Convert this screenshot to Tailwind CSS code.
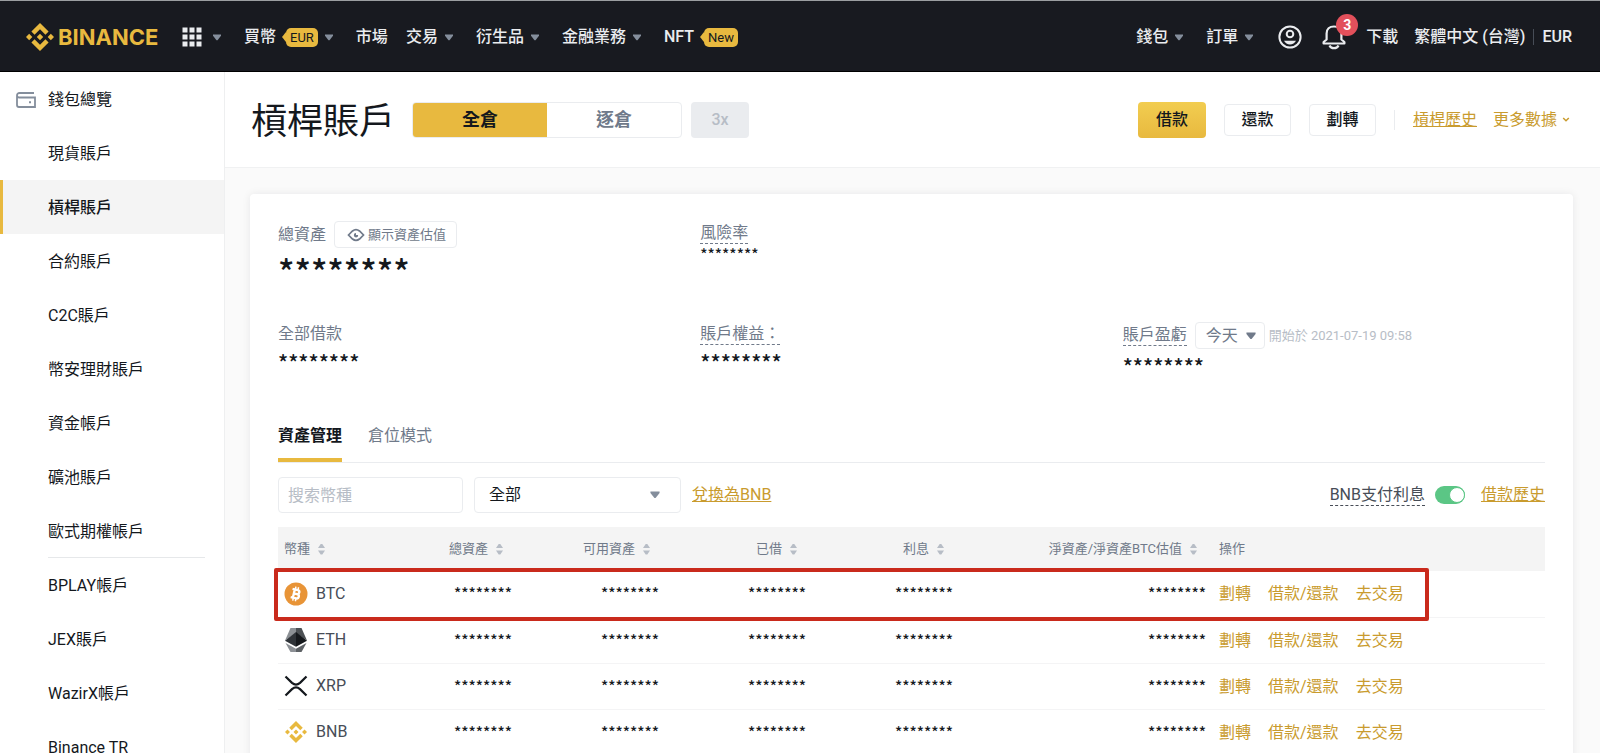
<!DOCTYPE html>
<html lang="zh-Hant">
<head>
<meta charset="utf-8">
<title>槓桿賬戶</title>
<script src="https://cdn.jsdelivr.net/npm/@tailwindcss/browser@4"></script>
</head>
<body class="h-screen flex flex-col overflow-hidden bg-[#fafafa] font-[Roboto,'Noto_Sans_CJK_TC',sans-serif] text-base leading-6 text-[#14181d]">
<svg class="hidden" aria-hidden="true">
  <symbol id="caret" viewBox="0 0 10 7"><path d="M1 .5h8v1.2L5.500 6.200h-1L1 1.700z" fill="currentColor"/></symbol>
  <symbol id="sort" viewBox="0 0 7 12"><path d="M0 5h7L4.300 1H2.700zM0 7.500h7L4.300 11.500H2.700z" fill="currentColor"/></symbol>
  <symbol id="diamond" viewBox="0 0 126.600 126.600"><path fill="currentColor" d="M38.700 53.200 63.300 28.600 87.900 53.200 102.200 38.900 63.300 0 24.400 38.900zM0 63.300 14.300 49 28.600 63.300 14.300 77.600zM38.700 73.400 63.300 98 87.900 73.400 102.200 87.700 63.300 126.600 24.400 87.700zM98 63.300 112.300 49 126.600 63.300 112.300 77.600zM77.800 63.300 63.300 48.800 48.800 63.300 63.300 77.800z"/></symbol>
</svg>

<header class="h-[72px] shrink-0 flex items-center justify-between pt-0.5 pl-[26px] pr-7 bg-[#181a20] border-t border-t-[#9b9ea1] border-b border-b-black text-[#eaecef] font-medium whitespace-nowrap">
  <nav class="flex items-center">
    <a href="#" class="flex items-center gap-1 text-[#e8b93f]">
      <svg class="size-7"><use href="#diamond"/></svg>
      <span class="w-[104px] font-[Inter] font-bold text-[22px]">BINANCE</span>
    </a>
    <button aria-label="產品" class="ml-5 flex items-center gap-2.5">
      <svg class="size-5" viewBox="0 0 20 20" fill="#eaecef"><path d="M.5.5h5v5h-5zM7.500.5h5v5h-5zM14.500.5h5v5h-5zM.5 7.500h5v5h-5zM7.500 7.500h5v5h-5zM14.500 7.500h5v5h-5zM.5 14.500h5v5h-5zM7.500 14.500h5v5h-5zM14.500 14.500h5v5h-5z"/></svg>
      <svg class="w-2.5 h-[7px] text-[#848e9c]"><use href="#caret"/></svg>
    </button>
    <a href="#" class="ml-[22px] flex items-center">買幣
      <span class="ml-1.5 flex items-center"><svg class="w-1 h-2.5" viewBox="0 0 4 10"><path d="M4 0v10L0 5z" fill="#e8b93f"/></svg><span class="rounded-[5px] bg-[#e8b93f] px-1 text-[13px] leading-[19px] font-normal text-[#14181d]">EUR</span></span>
      <svg class="ml-1.5 w-2.5 h-[7px] text-[#848e9c]"><use href="#caret"/></svg>
    </a>
    <a href="#" class="ml-[22px]">市場</a>
    <a href="#" class="ml-[18px] flex items-center gap-1.5">交易 <svg class="w-2.5 h-[7px] text-[#848e9c]"><use href="#caret"/></svg></a>
    <a href="#" class="ml-[22px] flex items-center gap-1.5">衍生品 <svg class="w-2.5 h-[7px] text-[#848e9c]"><use href="#caret"/></svg></a>
    <a href="#" class="ml-[22px] flex items-center gap-1.5">金融業務 <svg class="w-2.5 h-[7px] text-[#848e9c]"><use href="#caret"/></svg></a>
    <a href="#" class="ml-[22px] flex items-center">NFT
      <span class="ml-1.5 flex items-center"><svg class="w-1 h-2.5" viewBox="0 0 4 10"><path d="M4 0v10L0 5z" fill="#e8b93f"/></svg><span class="rounded-[5px] bg-[#e8b93f] px-1 text-[13px] leading-[19px] font-normal text-[#14181d]">New</span></span>
    </a>
  </nav>
  <div class="flex items-center">
    <a href="#" class="flex items-center gap-1.5">錢包 <svg class="w-2.5 h-[7px] text-[#848e9c]"><use href="#caret"/></svg></a>
    <a href="#" class="ml-[22px] flex items-center gap-1.5">訂單 <svg class="w-2.5 h-[7px] text-[#848e9c]"><use href="#caret"/></svg></a>
    <button aria-label="個人中心" class="ml-6"><svg class="size-6" viewBox="0 0 24 24" fill="none" stroke="#eaecef" stroke-width="2"><circle cx="12" cy="12" r="10.600"/><circle cx="12" cy="9" r="3.300"/><path d="M6 15.800h12c-1.200 2.500-3.500 3.600-6 3.600s-4.800-1.100-6-3.600z" fill="#eaecef" stroke="none"/></svg></button>
    <button aria-label="通知" class="relative ml-5"><svg class="w-6 h-[26px]" viewBox="0 0 24 26" fill="none" stroke="#eaecef" stroke-width="2.200"><path d="M4.600 15.500V9.500C4.600 5 7.500 2.500 12 2.500s7.400 2.500 7.400 7v6l3 2.500v1.500H1.600V18z" stroke-linejoin="round"/><path d="M7.500 21.500c1 2.200 2.500 2.700 4.500 2.700s3.500-.5 4.500-2.700"/></svg><span class="absolute -top-2.5 left-3.5 size-[22px] rounded-full bg-[#e2505b] text-sm leading-[22px] font-bold text-white">3</span></button>
    <a href="#" class="ml-5">下載</a>
    <a href="#" class="ml-4">繁體中文 (台灣)</a>
    <span class="mx-2 h-4 w-px bg-[#474d57]"></span>
    <a href="#">EUR</a>
  </div>
</header>

<div class="flex-1 min-h-0 flex">
  <aside class="w-[225px] shrink-0 overflow-hidden bg-white border-r border-[#eeeff0]">
    <nav class="flex flex-col">
      <a href="#" class="h-[54px] shrink-0 flex items-center gap-3 pt-px pl-4"><svg class="w-5 h-4" viewBox="0 0 20 16" fill="none" stroke="#848e9c" stroke-width="1.800"><path d="M18 1H3.500a2.500 2.500 0 0 0-2.500 2.500V13a2 2 0 0 0 2 2h16V5.500H3.500A2.200 2.200 0 0 1 1 3.300"/><path d="M13 10.300h2" stroke-width="2"/></svg>錢包總覽</a>
      <a href="#" class="h-[54px] shrink-0 flex items-center pt-px pl-12">現貨賬戶</a>
      <a href="#" aria-current="page" class="h-[54px] shrink-0 flex items-center border-l-[3px] border-[#e8b93f] bg-[#f4f4f4] pt-px pl-[45px] font-medium">槓桿賬戶</a>
      <a href="#" class="h-[54px] shrink-0 flex items-center pt-px pl-12">合約賬戶</a>
      <a href="#" class="h-[54px] shrink-0 flex items-center pt-px pl-12">C2C賬戶</a>
      <a href="#" class="h-[54px] shrink-0 flex items-center pt-px pl-12">幣安理財賬戶</a>
      <a href="#" class="h-[54px] shrink-0 flex items-center pt-px pl-12">資金帳戶</a>
      <a href="#" class="h-[54px] shrink-0 flex items-center pt-px pl-12">礦池賬戶</a>
      <a href="#" class="h-[54px] shrink-0 flex items-center pt-px pl-12">歐式期權帳戶</a>
      <hr class="-mt-px ml-12 mr-[19px] border-[#e6e8ea]">
      <a href="#" class="h-[54px] shrink-0 flex items-center pt-px pl-12">BPLAY帳戶</a>
      <a href="#" class="h-[54px] shrink-0 flex items-center pt-px pl-12">JEX賬戶</a>
      <a href="#" class="h-[54px] shrink-0 flex items-center pt-px pl-12">WazirX帳戶</a>
      <a href="#" class="h-[54px] shrink-0 flex items-center pt-px pl-12">Binance TR</a>
    </nav>
  </aside>

  <main class="flex-1 min-w-0 overflow-hidden whitespace-nowrap">
    <div class="h-24 flex items-center justify-between bg-white border-b border-[#f0f1f2] pl-[26px] pr-[30px]">
      <div class="flex items-center">
        <h1 class="pt-1 text-4xl">槓桿賬戶</h1>
        <div class="ml-[17px] flex h-9 w-[270px] overflow-hidden rounded border border-[#eaecef] text-lg font-bold">
          <button class="flex-1 bg-[#e8b93f]">全倉</button>
          <button class="flex-1 text-[#707a8a]">逐倉</button>
        </div>
        <button class="ml-[9px] h-9 w-[58px] rounded bg-[#eaecef] font-medium text-[#b7bdc6]">3x</button>
      </div>
      <div class="flex items-center">
        <button class="h-9 w-[68px] rounded bg-linear-to-b from-[#f2cd50] to-[#e8b93f] font-medium">借款</button>
        <button class="ml-[18px] h-8 w-[67px] rounded border border-[#eaecef] font-medium">還款</button>
        <button class="ml-[18px] h-8 w-[67px] rounded border border-[#eaecef] font-medium">劃轉</button>
        <span class="mx-[18px] h-5 w-px bg-[#eaecef]"></span>
        <a href="#" class="underline text-[#c99b2e]">槓桿歷史</a>
        <button class="ml-4 flex items-center gap-[5px] text-[#c99b2e]">更多數據 <svg class="w-2 h-1.5" viewBox="0 0 8 6" fill="none" stroke="currentColor" stroke-width="1.500"><path d="M1.200 1 4 3.800 6.800 1"/></svg></button>
      </div>
    </div>

    <section class="mt-[26px] ml-[25px] mr-[27px] min-h-full rounded bg-white px-7 pt-6 shadow-[0_0_8px_rgba(24,26,32,0.08)]">
      <div class="grid grid-cols-3 gap-y-[34px]">
        <div>
          <div class="flex items-center gap-2 pt-[3px] text-[#707a8a]">總資產
            <button class="h-[27px] flex items-center gap-[3px] rounded border border-[#eaecef] pl-3 pr-2.5 text-[13px]"><svg class="w-[18px] h-3.5" viewBox="0 0 18 14" fill="none" stroke="currentColor" stroke-width="1.700"><path d="M1.500 7 5.500 3Q9 .3 12.500 3L16.500 7l-4 4Q9 13.700 5.500 11z"/><path d="M9 5v2h2.200A2.200 2.200 0 1 1 9 5" fill="currentColor" stroke="none"/></svg>顯示資產估值</button>
          </div>
          <div class="mt-[5px] h-[35px] font-['Noto_Sans_CJK_TC'] text-[34px] leading-9 font-medium">********</div>
        </div>
        <div>
          <div class="flex pt-[5px]"><span class="border-b border-dashed border-[#707a8a] leading-5 text-[#707a8a]">風險率</span></div>
          <div class="font-['Noto_Sans_CJK_TC'] text-[15px] leading-5 font-medium">********</div>
        </div>
        <div></div>
        <div>
          <div class="text-[#707a8a]">全部借款</div>
          <div class="mt-1 font-['Noto_Sans_CJK_TC'] text-[21px] leading-6 font-medium">********</div>
        </div>
        <div>
          <div class="flex pt-0.5"><span class="border-b border-dashed border-[#707a8a] leading-5 text-[#707a8a]">賬戶權益：</span></div>
          <div class="mt-[5px] font-['Noto_Sans_CJK_TC'] text-[21px] leading-6 font-medium">********</div>
        </div>
        <div>
          <div class="flex items-center text-[#707a8a]">
            <label for="period" class="border-b border-dashed border-[#707a8a] leading-5">賬戶盈虧</label>
            <span class="relative ml-2"><select id="period" class="block h-[27px] w-[70px] appearance-none rounded border border-[#eaecef] pl-2.5 leading-6"><option>今天</option></select><svg class="pointer-events-none absolute right-2 top-2.5 w-3 h-2"><use href="#caret"/></svg></span>
            <span class="ml-1 text-[13px] text-[#b7bdc6]">開始於 2021-07-19 09:58</span>
          </div>
          <div class="mt-[5px] font-['Noto_Sans_CJK_TC'] text-[21px] leading-6 font-medium">********</div>
        </div>
      </div>

      <div class="mt-9 flex gap-[26px] border-b border-[#eaecef]">
        <button class="-mb-px h-12 border-b-4 border-[#e8b93f] font-bold">資產管理</button>
        <button class="h-12 pb-1 text-[#707a8a]">倉位模式</button>
      </div>

      <div class="mt-3.5 flex items-center justify-between">
        <div class="flex items-center">
          <input aria-label="搜索幣種" placeholder="搜索幣種" class="h-9 w-[185px] rounded border border-[#eaecef] px-[9px] placeholder:text-[#b7bdc6]">
          <span class="relative ml-[11px]"><select aria-label="資產類型" class="block h-9 w-[207px] appearance-none rounded border border-[#eaecef] pl-3.5"><option>全部</option></select><svg class="pointer-events-none absolute right-5 top-3.5 w-3 h-2 text-[#848e9c]"><use href="#caret"/></svg></span>
          <a href="#" class="ml-[11px] underline text-[#c99b2e]">兌換為BNB</a>
        </div>
        <div class="flex items-center">
          <label for="bnb" class="border-b border-dashed border-[#474d57] leading-5 text-[#474d57]">BNB支付利息</label>
          <input id="bnb" type="checkbox" checked class="ml-2.5 h-[18px] w-[30px] appearance-none rounded-full bg-[#5bc685] after:mt-px after:ml-3.5 after:block after:size-4 after:rounded-full after:border after:border-[#5bc685] after:bg-white after:content-['']">
          <a href="#" class="ml-4 underline text-[#c99b2e]">借款歷史</a>
        </div>
      </div>

      <div class="relative mt-3.5">
        <table class="w-full table-fixed text-right">
          <colgroup><col class="w-[93px]"><col class="w-[147px]"><col class="w-[147px]"><col class="w-[147px]"><col class="w-[147px]"><col class="w-[253px]"><col></colgroup>
          <thead class="bg-[#f4f4f4] text-[13px] text-[#707a8a]">
            <tr class="h-11">
              <th class="pl-1.5 text-left font-normal"><span class="inline-flex items-center gap-2">幣種<svg class="w-[7px] h-3 text-[#b7bdc6]"><use href="#sort"/></svg></span></th>
              <th class="pr-[15px] font-normal"><span class="inline-flex items-center gap-2">總資產<svg class="w-[7px] h-3 text-[#b7bdc6]"><use href="#sort"/></svg></span></th>
              <th class="pr-[15px] font-normal"><span class="inline-flex items-center gap-2">可用資產<svg class="w-[7px] h-3 text-[#b7bdc6]"><use href="#sort"/></svg></span></th>
              <th class="pr-[15px] font-normal"><span class="inline-flex items-center gap-2">已借<svg class="w-[7px] h-3 text-[#b7bdc6]"><use href="#sort"/></svg></span></th>
              <th class="pr-[15px] font-normal"><span class="inline-flex items-center gap-2">利息<svg class="w-[7px] h-3 text-[#b7bdc6]"><use href="#sort"/></svg></span></th>
              <th class="pr-[15px] font-normal"><span class="inline-flex items-center gap-2">淨資產/淨資產BTC估值<svg class="w-[7px] h-3 text-[#b7bdc6]"><use href="#sort"/></svg></span></th>
              <th class="pl-[7px] text-left font-normal">操作</th>
            </tr>
          </thead>
          <tbody id="rows"></tbody>
        </table>
        <div class="pointer-events-none absolute -left-1 top-[41px] h-[53px] w-[1155px] rounded-xs border-4 border-[#c92a1c]"></div>
      </div>
    </section>
  </main>
</div>

<script>
const icons = {
  BTC: '<circle cx="12" cy="12" r="11.500" fill="#e89437"/><g transform="rotate(13 12 12)" fill="none" stroke="#fff"><path d="M7.500 7.800h5.300a2 2 0 0 1 0 4.100H9.500h3.700a2.100 2.100 0 0 1 0 4.300H7.500M9.800 7.800v8.400" stroke-width="2.400"/><path d="M10.300 4.800v3M13 4.800v3M10.300 16v3.200M13 16v3.200" stroke-width="1.500"/></g>',
  ETH: '<path d="M6.500 0H12v5L1 12.500z" fill="#8c9095"/><path d="M17.500 0H12v5l11 7.500z" fill="#4c5054"/><path d="M12 4 1 12.800l11 6z" fill="#2f3338"/><path d="m12 4 11 8.800-11 6z" fill="#15181c"/><path d="m1.500 15 10.500 5.800V24H6.500z" fill="#8c9095"/><path d="M22.500 15 12 20.800V24h5.500z" fill="#5d6165"/>',
  XRP: '<path d="M1.500 2.500 8 8.900q4 3.600 8 0l6.500-6.400M1.500 21.500 8 15.100q4-3.600 8 0l6.500 6.400" fill="none" stroke="#14181d" stroke-width="2.200"/>',
  BNB: '<use href="#diamond" class="text-[#e8b93f]" x="1" y="1" width="22" height="22"/>'
};
const stars = '<td class="h-[46px] pr-1.5 pb-px font-[\'Noto_Sans_CJK_TC\'] text-[15px] font-medium">********</td>';
document.getElementById('rows').innerHTML = Object.keys(icons).map(name => `
  <tr class="border-b border-[#f4f4f5]">
    <td class="pl-1.5 text-left text-[#474d57]"><span class="flex items-center gap-2"><svg class="size-6 shrink-0" viewBox="0 0 24 24">${icons[name]}</svg>${name}</span></td>
    ${stars.repeat(5)}
    <td class="pt-px pl-[7px] text-left text-[#c99b2e]"><span class="flex gap-[17px]"><a href="#">劃轉</a><a href="#">借款/還款</a><a href="#">去交易</a></span></td>
  </tr>`).join('');
</script>
</body>
</html>
